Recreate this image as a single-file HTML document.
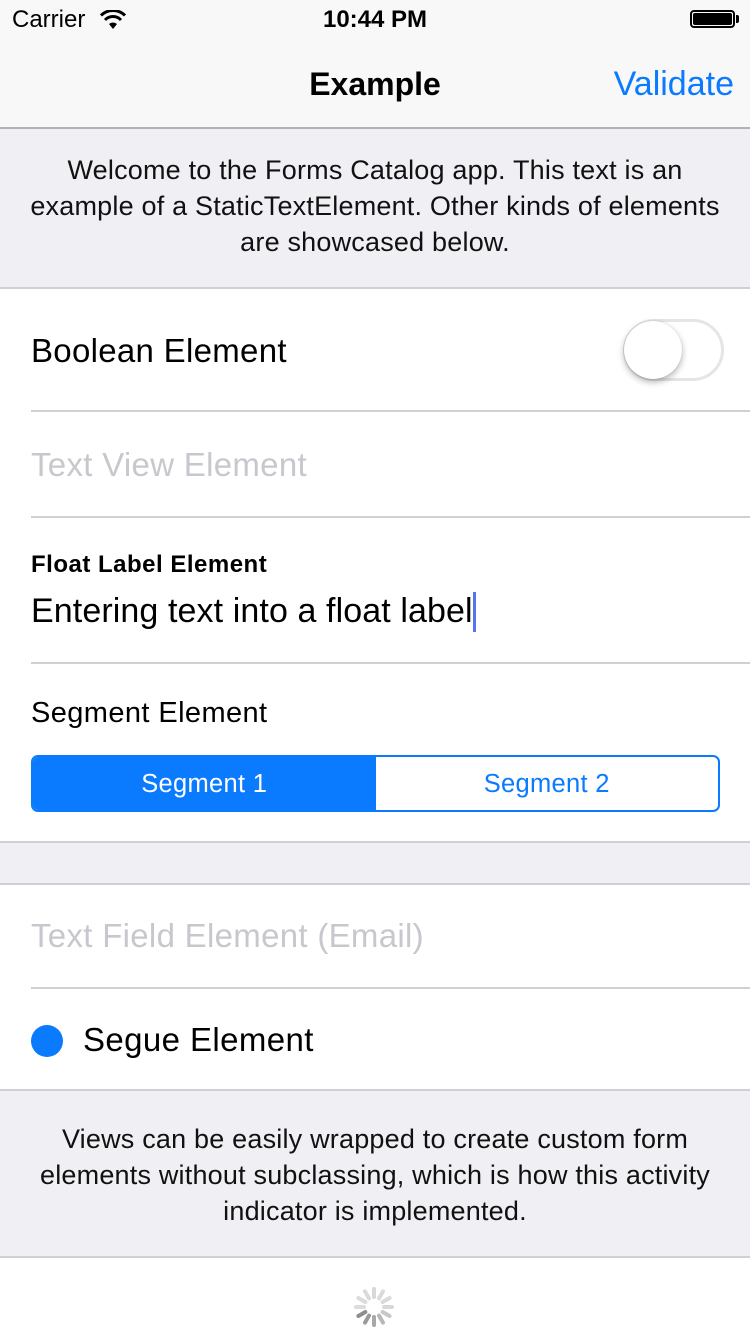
<!DOCTYPE html>
<html><head><style>
*{margin:0;padding:0;box-sizing:border-box}
body{width:750px;height:1334px;background:#efeff4;font-family:"Liberation Sans",sans-serif;position:relative;overflow:hidden}
.a{position:absolute}
.w{background:#fff;left:0;width:750px}
.sep{position:absolute;height:2px;background:#d0d0d4;right:0}
.t{position:absolute;left:31px;font-size:33px;letter-spacing:0.3px;color:#000;white-space:nowrap}
.c{text-align:center;font-size:27px;line-height:36px;color:#111;left:0;width:750px;letter-spacing:0.2px}
</style></head><body>
<div class="a" style="left:0;top:0;width:750px;height:128px;background:#f8f8f8"></div>
<div class="a" style="left:12px;top:6px;font-size:24px">Carrier</div>
<svg class="a" style="left:100px;top:10px" width="26" height="20" viewBox="0 0 26 20"><path d="M13 19 L9 14 A6 6 0 0 1 17 14 Z" fill="#000"/><path d="M5 10 A11 11 0 0 1 21 10" stroke="#000" stroke-width="3" fill="none"/><path d="M1 5.5 A17 17 0 0 1 25 5.5" stroke="#000" stroke-width="3" fill="none"/></svg>
<div class="a" style="left:0;width:750px;text-align:center;top:6px;font-size:24px;font-weight:bold">10:44 PM</div>
<div class="a" style="left:690px;top:10px;width:45px;height:18px;border:2px solid #000;border-radius:4px;padding:1px"><div style="background:#000;width:100%;height:100%;border-radius:2px"></div></div>
<div class="a" style="left:736px;top:15px;width:3px;height:8px;background:#000;border-radius:0 2px 2px 0"></div>
<div class="a" style="left:0;width:750px;text-align:center;top:66px;font-size:32px;font-weight:bold">Example</div>
<div class="a" style="right:16px;top:65px;font-size:34px;color:#0a7aff">Validate</div>
<div class="sep" style="top:127px;left:0;background:#b2b2b2;height:1.5px"></div>
<div class="a c" style="top:152px">Welcome to the Forms Catalog app. This text is an<br>example of a StaticTextElement. Other kinds of elements<br>are showcased below.</div>
<div class="a w" style="top:288px;height:554px"></div>
<div class="sep" style="top:287px;left:0"></div>
<div class="t" style="top:332px">Boolean Element</div>
<div class="a" style="left:623px;top:319px;width:101px;height:62px;border:3px solid #e5e5e5;border-radius:31px"></div>
<div class="a" style="left:624px;top:321px;width:58px;height:58px;border-radius:50%;background:#fff;box-shadow:0 3px 7px rgba(0,0,0,.3),0 0 1px rgba(0,0,0,.2)"></div>
<div class="sep" style="top:410px;left:31px"></div>
<div class="t" style="top:446px;color:#c7c7cd">Text View Element</div>
<div class="sep" style="top:516px;left:31px"></div>
<div class="t" style="top:551px;font-size:24px;letter-spacing:0.5px;font-weight:bold">Float Label Element</div>
<div class="t" style="top:592px;font-size:34px;letter-spacing:0.1px">Entering text into a float label</div>
<div class="a" style="left:473px;top:592px;width:3px;height:40px;background:#5773ee"></div>
<div class="sep" style="top:662px;left:31px"></div>
<div class="t" style="top:697px;font-size:29px;letter-spacing:0.4px">Segment Element</div>
<div class="a" style="left:31px;top:755px;width:689px;height:57px;border:2px solid #0a7aff;border-radius:7px;overflow:hidden;display:flex;font-size:25.5px;letter-spacing:0.3px">
<div style="flex:1;background:#0a7aff;color:#fff;text-align:center;line-height:55px">Segment 1</div>
<div style="flex:1;color:#0a7aff;text-align:center;line-height:55px">Segment 2</div></div>
<div class="sep" style="top:841px;left:0"></div>
<div class="a w" style="top:884px;height:206px"></div>
<div class="sep" style="top:883px;left:0"></div>
<div class="t" style="top:917px;color:#c7c7cd">Text Field Element (Email)</div>
<div class="sep" style="top:987px;left:31px"></div>
<div class="a" style="left:31px;top:1025px;width:32px;height:32px;border-radius:50%;background:#0a7aff"></div>
<div class="t" style="left:83px;top:1021px;letter-spacing:0.4px">Segue Element</div>
<div class="sep" style="top:1089px;left:0"></div>
<div class="a c" style="top:1121px">Views can be easily wrapped to create custom form<br>elements without subclassing, which is how this activity<br>indicator is implemented.</div>
<div class="a w" style="top:1257px;height:77px"></div>
<div class="sep" style="top:1256px;left:0"></div>
<svg class="a" style="left:354px;top:1287px" width="40" height="40" viewBox="-20 -20 40 40">
<g stroke-width="4" stroke-linecap="round">
<line x1="0" y1="-18" x2="0" y2="-10" stroke="#d8d8d8" transform="rotate(0)"/>
<line x1="0" y1="-18" x2="0" y2="-10" stroke="#dadada" transform="rotate(30)"/>
<line x1="0" y1="-18" x2="0" y2="-10" stroke="#dadada" transform="rotate(60)"/>
<line x1="0" y1="-18" x2="0" y2="-10" stroke="#d8d8d8" transform="rotate(90)"/>
<line x1="0" y1="-18" x2="0" y2="-10" stroke="#c8c8c8" transform="rotate(120)"/>
<line x1="0" y1="-18" x2="0" y2="-10" stroke="#b8b8b8" transform="rotate(150)"/>
<line x1="0" y1="-18" x2="0" y2="-10" stroke="#a8a8a8" transform="rotate(180)"/>
<line x1="0" y1="-18" x2="0" y2="-10" stroke="#9a9a9a" transform="rotate(210)"/>
<line x1="0" y1="-18" x2="0" y2="-10" stroke="#8e8e8e" transform="rotate(240)"/>
<line x1="0" y1="-18" x2="0" y2="-10" stroke="#dcdcdc" transform="rotate(270)"/>
<line x1="0" y1="-18" x2="0" y2="-10" stroke="#dcdcdc" transform="rotate(300)"/>
<line x1="0" y1="-18" x2="0" y2="-10" stroke="#dadada" transform="rotate(330)"/>
</g></svg>
</body></html>
